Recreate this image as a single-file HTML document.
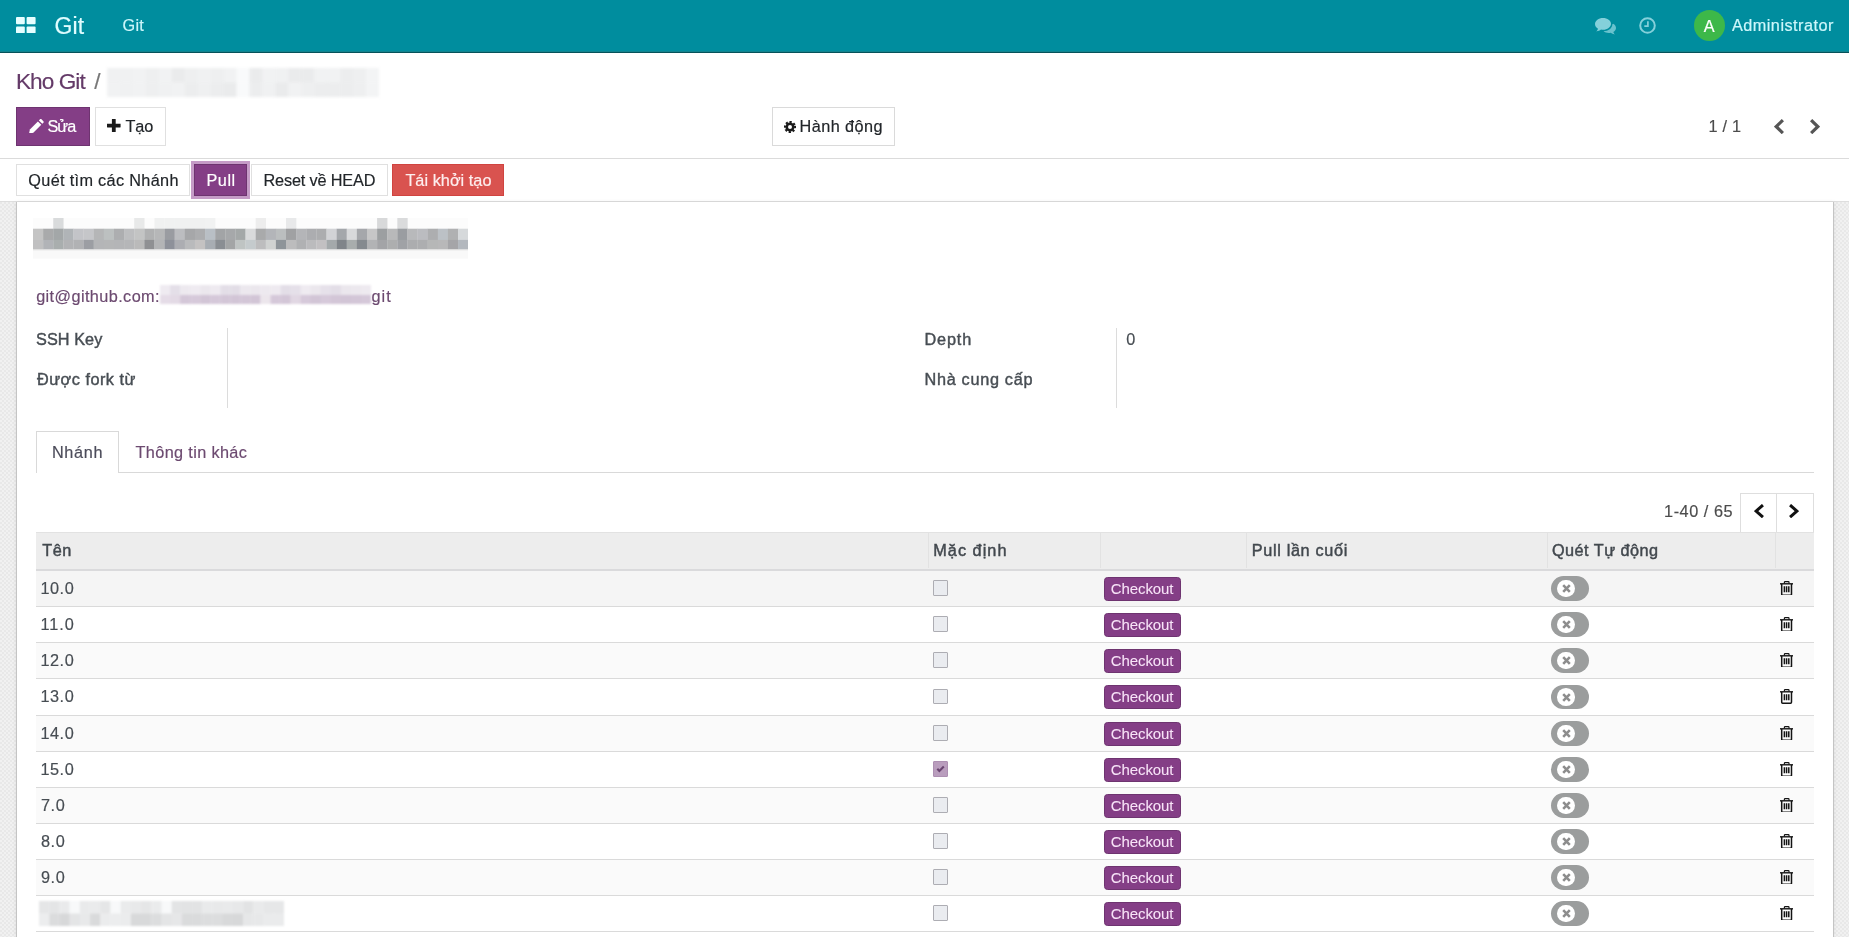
<!DOCTYPE html>
<html><head><meta charset="utf-8"><title>Git</title>
<style>
html,body{margin:0;padding:0;}
body{width:1849px;height:937px;overflow:hidden;background:#fff;position:relative;font-family:'Liberation Sans', sans-serif;}
.b{position:absolute;display:block;}
.t{position:absolute;white-space:pre;line-height:1;display:block;}
</style></head><body>
<div class="b" style="left:0px;top:0px;width:1849px;height:51px;background:#008d9e;"></div>
<div class="b" style="left:0px;top:51px;width:1849px;height:1px;background:#13838e;"></div>
<div class="b" style="left:0px;top:52px;width:1849px;height:1px;background:#06525a;"></div>
<div class="b" style="left:0px;top:158px;width:1849px;height:1px;background:#dbdbdb;"></div>
<div class="b" style="left:0px;top:201px;width:1849px;height:1px;background:#dedede;"></div>
<div class="b" style="left:0px;top:202px;width:1849px;height:735px;background-color:#ececec;background-image:conic-gradient(#f1f1f1 25%,#e8e8e8 0 50%,#f1f1f1 0 75%,#e8e8e8 0);background-size:4px 4px;"></div>
<div class="b" style="left:16px;top:202px;width:1818px;height:735px;background:#fff;border-left:1px solid #c4c4c4;border-right:1px solid #c4c4c4;box-sizing:border-box;box-shadow:0 0 4px rgba(0,0,0,.08);"></div>
<svg class="b" style="left:16px;top:16.7px" width="19.6" height="16.3" viewBox="0 0 19.6 16.3"><g fill="#e6feff"><rect x="0" y="0" width="8.800" height="7.200" rx="1"/><rect x="10.600" y="0" width="9" height="7.200" rx="1"/><rect x="0" y="9.500" width="8.800" height="6.800" rx="1"/><rect x="10.600" y="9.500" width="9" height="6.800" rx="1"/></g></svg>
<svg class="b" style="left:1595px;top:18px" width="21" height="17" viewBox="0 0 21 17"><g fill="#84d0da"><path d="M8 0C3.6 0 0 2.7 0 6c0 1.9 1.2 3.6 3 4.7c-.3 1-.9 1.9-1.7 2.7c1.900-.2 3.500-.9 4.700-1.800c.6.100 1.300.200 2 .2c4.400 0 8-2.700 8-6S12.400 0 8 0z"/><path d="M17.300 6.500c0 3.700-3.900 6.600-8.800 6.800c1.300 1.100 3.200 1.700 5.300 1.700c.6 0 1.200-.1 1.800-.2c1.100.9 2.500 1.500 4.200 1.700c-.7-.7-1.200-1.500-1.500-2.400c1.600-1 2.700-2.500 2.700-4.200c0-1.700-1.100-3.200-2.800-4.200c0 .3 -.9.500-.9.800z" opacity=".8"/></g></svg>
<svg class="b" style="left:1639px;top:17px" width="17" height="17" viewBox="0 0 17 17"><circle cx="8.5" cy="8.5" r="7.3" fill="none" stroke="#84d0da" stroke-width="2"/><path d="M8.9 4.300v4.900H5.300" fill="none" stroke="#84d0da" stroke-width="1.700"/></svg>
<div class="b" style="left:1694px;top:9.7px;width:31px;height:31.000000000000004px;background:#3db849;border-radius:50%;"></div>
<div class="b" style="left:16px;top:107px;width:74px;height:39px;background:#843e86;border:1px solid #6e3470;box-sizing:border-box;"></div>
<div class="b" style="left:95px;top:107px;width:71px;height:39px;background:#fff;border:1px solid #e0e0e0;box-sizing:border-box;"></div>
<div class="b" style="left:772px;top:107px;width:123px;height:39px;background:#fff;border:1px solid #dadada;box-sizing:border-box;"></div>
<svg class="b" style="left:28.9px;top:118.8px" width="14.7" height="14.7" viewBox="0 0 14.7 14.7"><g fill="#fff"><path d="M0 14.700l.9-4.300L8.900 2.400l3.400 3.400L4.300 13.800z"/><path d="M9.900 1.400l1.100-1.100c.4-.4 1.100-.4 1.500 0l1.900 1.900c.4.400.4 1.100 0 1.500l-1.100 1.100z"/></g></svg>
<svg class="b" style="left:107.2px;top:118.9px" width="13.6" height="13.2" viewBox="0 0 13.6 13.2"><path d="M4.900 .4c0-.3.200-.4.400-.4h3c.2 0 .4.100.4.400v4.300h4.500c.3 0 .4.200.4.400v3c0 .2-.1.400-.4.400H8.700v4.300c0 .3-.2.400-.4.400h-3c-.2 0-.4-.1-.4-.4V8.500H.4c-.3 0-.4-.2-.4-.4v-3c0-.2.100-.4.400-.4h4.500z" fill="#1b1b1b"/></svg>
<svg class="b" style="left:784px;top:121px" width="12" height="12" viewBox="-6 -6 12 12"><circle r="3.300" fill="none" stroke="#1b1b1b" stroke-width="2.600"/><circle r="5" fill="none" stroke="#1b1b1b" stroke-width="2.200" stroke-dasharray="2.100 1.827"  transform="rotate(-12)"/></svg>
<svg class="b" style="left:1774.3px;top:118.9px" width="10" height="15.2" viewBox="0 0 10 15.2"><polyline points="8.88,1.12 2.24,7.60 8.88,14.08" fill="none" stroke="#555" stroke-width="3.2" stroke-linejoin="miter"/></svg>
<svg class="b" style="left:1809.5px;top:118.9px" width="10" height="15.2" viewBox="0 0 10 15.2"><polyline points="1.12,1.12 7.76,7.60 1.12,14.08" fill="none" stroke="#555" stroke-width="3.2" stroke-linejoin="miter"/></svg>
<div class="b" style="left:16px;top:164px;width:174px;height:32px;background:#fff;border:1px solid #e0e0e0;box-sizing:border-box;"></div>
<div class="b" style="left:191.4px;top:161.4px;width:58.19999999999999px;height:37.19999999999999px;background:#c59bc7;"></div>
<div class="b" style="left:194.2px;top:164.2px;width:53.0px;height:31.400000000000006px;background:#843e86;border:1px solid #6e3470;box-sizing:border-box;"></div>
<div class="b" style="left:251.4px;top:164px;width:136.20000000000002px;height:32px;background:#fff;border:1px solid #e0e0e0;box-sizing:border-box;"></div>
<div class="b" style="left:392px;top:164.2px;width:112px;height:31.400000000000006px;background:#d9534f;border:1px solid #d04440;box-sizing:border-box;"></div>
<svg class="b" style="left:107px;top:68px;filter:blur(1.400px)" width="272" height="29"><rect x="0.00" y="0.0" width="13.35" height="14.800" fill="rgb(240,241,242)"/><rect x="0.00" y="14.5" width="13.35" height="14.800" fill="rgb(241,242,243)"/><rect x="12.95" y="0.0" width="13.35" height="14.800" fill="rgb(240,241,242)"/><rect x="12.95" y="14.5" width="13.35" height="14.800" fill="rgb(240,241,242)"/><rect x="25.90" y="0.0" width="13.35" height="14.800" fill="rgb(241,242,243)"/><rect x="25.90" y="14.5" width="13.35" height="14.800" fill="rgb(241,242,243)"/><rect x="38.86" y="0.0" width="13.35" height="14.800" fill="rgb(238,239,240)"/><rect x="38.86" y="14.5" width="13.35" height="14.800" fill="rgb(238,239,240)"/><rect x="51.81" y="0.0" width="13.35" height="14.800" fill="rgb(241,242,243)"/><rect x="51.81" y="14.5" width="13.35" height="14.800" fill="rgb(240,241,242)"/><rect x="64.76" y="0.0" width="13.35" height="14.800" fill="rgb(234,235,236)"/><rect x="64.76" y="14.5" width="13.35" height="14.800" fill="rgb(241,242,243)"/><rect x="77.71" y="0.0" width="13.35" height="14.800" fill="rgb(238,239,240)"/><rect x="77.71" y="14.5" width="13.35" height="14.800" fill="rgb(236,237,238)"/><rect x="90.67" y="0.0" width="13.35" height="14.800" fill="rgb(240,241,242)"/><rect x="90.67" y="14.5" width="13.35" height="14.800" fill="rgb(239,240,241)"/><rect x="103.62" y="0.0" width="13.35" height="14.800" fill="rgb(238,239,240)"/><rect x="103.62" y="14.5" width="13.35" height="14.800" fill="rgb(236,237,238)"/><rect x="116.57" y="0.0" width="13.35" height="14.800" fill="rgb(241,242,243)"/><rect x="116.57" y="14.5" width="13.35" height="14.800" fill="rgb(234,235,236)"/><rect x="129.52" y="0.0" width="13.35" height="14.800" fill="rgb(249,250,251)"/><rect x="129.52" y="14.5" width="13.35" height="14.800" fill="rgb(249,250,251)"/><rect x="142.48" y="0.0" width="13.35" height="14.800" fill="rgb(234,235,236)"/><rect x="142.48" y="14.5" width="13.35" height="14.800" fill="rgb(236,237,238)"/><rect x="155.43" y="0.0" width="13.35" height="14.800" fill="rgb(241,242,243)"/><rect x="155.43" y="14.5" width="13.35" height="14.800" fill="rgb(240,241,242)"/><rect x="168.38" y="0.0" width="13.35" height="14.800" fill="rgb(240,241,242)"/><rect x="168.38" y="14.5" width="13.35" height="14.800" fill="rgb(234,235,236)"/><rect x="181.33" y="0.0" width="13.35" height="14.800" fill="rgb(234,235,236)"/><rect x="181.33" y="14.5" width="13.35" height="14.800" fill="rgb(241,242,243)"/><rect x="194.29" y="0.0" width="13.35" height="14.800" fill="rgb(234,235,236)"/><rect x="194.29" y="14.5" width="13.35" height="14.800" fill="rgb(238,239,240)"/><rect x="207.24" y="0.0" width="13.35" height="14.800" fill="rgb(241,242,243)"/><rect x="207.24" y="14.5" width="13.35" height="14.800" fill="rgb(236,237,238)"/><rect x="220.19" y="0.0" width="13.35" height="14.800" fill="rgb(241,242,243)"/><rect x="220.19" y="14.5" width="13.35" height="14.800" fill="rgb(236,237,238)"/><rect x="233.14" y="0.0" width="13.35" height="14.800" fill="rgb(236,237,238)"/><rect x="233.14" y="14.5" width="13.35" height="14.800" fill="rgb(236,237,238)"/><rect x="246.10" y="0.0" width="13.35" height="14.800" fill="rgb(238,239,240)"/><rect x="246.10" y="14.5" width="13.35" height="14.800" fill="rgb(238,239,240)"/><rect x="259.05" y="0.0" width="13.35" height="14.800" fill="rgb(243,244,245)"/><rect x="259.05" y="14.5" width="13.35" height="14.800" fill="rgb(243,244,245)"/></svg>
<svg class="b" style="left:33px;top:218px;filter:blur(.7px)" width="435.2" height="46" viewBox="0 0 435.2 46"><rect x="0" y="0" width="435.2" height="11" fill="#fcfcfc"/><rect x="0.00" y="10.700" width="10.32" height="11.500" fill="#c4c4c4"/><rect x="0.00" y="21.900" width="10.32" height="9.500" fill="#c0c0c1"/><rect x="10.12" y="10.700" width="10.32" height="11.500" fill="#a9aaab"/><rect x="10.12" y="21.900" width="10.32" height="9.500" fill="#b1b3b7"/><rect x="20.24" y="0" width="10.32" height="11" fill="#d9dbdc"/><rect x="20.24" y="10.700" width="10.32" height="11.500" fill="#a3a7a8"/><rect x="20.24" y="21.900" width="10.32" height="9.500" fill="#a9aeae"/><rect x="30.36" y="10.700" width="10.32" height="11.500" fill="#b0b4b7"/><rect x="30.36" y="21.900" width="10.32" height="9.500" fill="#b2b3b5"/><rect x="40.48" y="10.700" width="10.32" height="11.500" fill="#c3c4c8"/><rect x="40.48" y="21.900" width="10.32" height="9.500" fill="#b1b2b4"/><rect x="50.60" y="10.700" width="10.32" height="11.500" fill="#c5c6c9"/><rect x="50.60" y="21.900" width="10.32" height="9.500" fill="#9c9ea3"/><rect x="60.73" y="10.700" width="10.32" height="11.500" fill="#b5b6b7"/><rect x="60.73" y="21.900" width="10.32" height="9.500" fill="#b4b5b7"/><rect x="70.85" y="10.700" width="10.32" height="11.500" fill="#bcc0c0"/><rect x="70.85" y="21.900" width="10.32" height="9.500" fill="#b5b6b7"/><rect x="80.97" y="10.700" width="10.32" height="11.500" fill="#adaeb0"/><rect x="80.97" y="21.900" width="10.32" height="9.500" fill="#b4b5b7"/><rect x="91.09" y="10.700" width="10.32" height="11.500" fill="#bdbec0"/><rect x="91.09" y="21.900" width="10.32" height="9.500" fill="#b5b6b8"/><rect x="101.21" y="0" width="10.32" height="11" fill="#e8e9e9"/><rect x="101.21" y="10.700" width="10.32" height="11.500" fill="#c3c4c4"/><rect x="101.21" y="21.900" width="10.32" height="9.500" fill="#bababa"/><rect x="111.33" y="10.700" width="10.32" height="11.500" fill="#b0b1b2"/><rect x="111.33" y="21.900" width="10.32" height="9.500" fill="#8f9093"/><rect x="121.45" y="0" width="10.32" height="11" fill="#f0f1f1"/><rect x="121.45" y="10.700" width="10.32" height="11.500" fill="#b6b7b8"/><rect x="121.45" y="21.900" width="10.32" height="9.500" fill="#b3b4b6"/><rect x="131.57" y="0" width="10.32" height="11" fill="#f0f1f1"/><rect x="131.57" y="10.700" width="10.32" height="11.500" fill="#9a9ca1"/><rect x="131.57" y="21.900" width="10.32" height="9.500" fill="#8e919a"/><rect x="141.69" y="0" width="10.32" height="11" fill="#f0f1f1"/><rect x="141.69" y="10.700" width="10.32" height="11.500" fill="#bcbdc0"/><rect x="141.69" y="21.900" width="10.32" height="9.500" fill="#acadb2"/><rect x="151.81" y="0" width="10.32" height="11" fill="#f0f1f1"/><rect x="151.81" y="10.700" width="10.32" height="11.500" fill="#a6a7a9"/><rect x="151.81" y="21.900" width="10.32" height="9.500" fill="#b9babc"/><rect x="161.93" y="0" width="10.32" height="11" fill="#f0f1f1"/><rect x="161.93" y="10.700" width="10.32" height="11.500" fill="#acadaf"/><rect x="161.93" y="21.900" width="10.32" height="9.500" fill="#c4c2c2"/><rect x="172.06" y="0" width="10.32" height="11" fill="#f1f2f2"/><rect x="172.06" y="10.700" width="10.32" height="11.500" fill="#b9bfc5"/><rect x="172.06" y="21.900" width="10.32" height="9.500" fill="#a8adb3"/><rect x="182.18" y="10.700" width="10.32" height="11.500" fill="#a2a4a6"/><rect x="182.18" y="21.900" width="10.32" height="9.500" fill="#8a8e93"/><rect x="192.30" y="10.700" width="10.32" height="11.500" fill="#a6a8aa"/><rect x="192.30" y="21.900" width="10.32" height="9.500" fill="#a3a5a6"/><rect x="202.42" y="10.700" width="10.32" height="11.500" fill="#a4a8a8"/><rect x="202.42" y="21.900" width="10.32" height="9.500" fill="#bfc4c3"/><rect x="212.54" y="10.700" width="10.32" height="11.500" fill="#d9dadb"/><rect x="212.54" y="21.900" width="10.32" height="9.500" fill="#c5cbcd"/><rect x="222.66" y="0" width="10.32" height="11" fill="#ededed"/><rect x="222.66" y="10.700" width="10.32" height="11.500" fill="#a9aaab"/><rect x="222.66" y="21.900" width="10.32" height="9.500" fill="#bdbdbe"/><rect x="232.78" y="10.700" width="10.32" height="11.500" fill="#b3b5b9"/><rect x="232.78" y="21.900" width="10.32" height="9.500" fill="#d0d2d1"/><rect x="242.90" y="10.700" width="10.32" height="11.500" fill="#bbbebf"/><rect x="242.90" y="21.900" width="10.32" height="9.500" fill="#8e9499"/><rect x="253.02" y="0" width="10.32" height="11" fill="#e8e9ea"/><rect x="253.02" y="10.700" width="10.32" height="11.500" fill="#a0a1a3"/><rect x="253.02" y="21.900" width="10.32" height="9.500" fill="#bcbcbd"/><rect x="263.14" y="10.700" width="10.32" height="11.500" fill="#b4b5b8"/><rect x="263.14" y="21.900" width="10.32" height="9.500" fill="#b0b1b3"/><rect x="273.27" y="10.700" width="10.32" height="11.500" fill="#acadb0"/><rect x="273.27" y="21.900" width="10.32" height="9.500" fill="#bbbbbd"/><rect x="283.39" y="10.700" width="10.32" height="11.500" fill="#acadaf"/><rect x="283.39" y="21.900" width="10.32" height="9.500" fill="#c2c0c2"/><rect x="293.51" y="10.700" width="10.32" height="11.500" fill="#d2d3d6"/><rect x="293.51" y="21.900" width="10.32" height="9.500" fill="#a4a9ab"/><rect x="303.63" y="10.700" width="10.32" height="11.500" fill="#a4a7ab"/><rect x="303.63" y="21.900" width="10.32" height="9.500" fill="#80858a"/><rect x="313.75" y="10.700" width="10.32" height="11.500" fill="#d8d9db"/><rect x="313.75" y="21.900" width="10.32" height="9.500" fill="#a8adad"/><rect x="323.87" y="10.700" width="10.32" height="11.500" fill="#a5a7ab"/><rect x="323.87" y="21.900" width="10.32" height="9.500" fill="#858a8f"/><rect x="333.99" y="10.700" width="10.32" height="11.500" fill="#c6c6c7"/><rect x="333.99" y="21.900" width="10.32" height="9.500" fill="#b2b3b5"/><rect x="344.11" y="0" width="10.32" height="11" fill="#d8d9da"/><rect x="344.11" y="10.700" width="10.32" height="11.500" fill="#9c9fa1"/><rect x="344.11" y="21.900" width="10.32" height="9.500" fill="#a3a4a7"/><rect x="354.23" y="10.700" width="10.32" height="11.500" fill="#b8b9ba"/><rect x="354.23" y="21.900" width="10.32" height="9.500" fill="#adaeaf"/><rect x="364.35" y="0" width="10.32" height="11" fill="#dadbdc"/><rect x="364.35" y="10.700" width="10.32" height="11.500" fill="#9a9da1"/><rect x="364.35" y="21.900" width="10.32" height="9.500" fill="#a0a2a6"/><rect x="374.47" y="10.700" width="10.32" height="11.500" fill="#b8b9bb"/><rect x="374.47" y="21.900" width="10.32" height="9.500" fill="#acadaf"/><rect x="384.60" y="10.700" width="10.32" height="11.500" fill="#bbbcc0"/><rect x="384.60" y="21.900" width="10.32" height="9.500" fill="#adaeb0"/><rect x="394.72" y="10.700" width="10.32" height="11.500" fill="#adaeb0"/><rect x="394.72" y="21.900" width="10.32" height="9.500" fill="#b6b7b7"/><rect x="404.84" y="10.700" width="10.32" height="11.500" fill="#bcc1c6"/><rect x="404.84" y="21.900" width="10.32" height="9.500" fill="#b8b8b9"/><rect x="414.96" y="10.700" width="10.32" height="11.500" fill="#b0b1b2"/><rect x="414.96" y="21.900" width="10.32" height="9.500" fill="#a5a5a8"/><rect x="425.08" y="10.700" width="10.32" height="11.500" fill="#d6d9db"/><rect x="425.08" y="21.900" width="10.32" height="9.500" fill="#b3b8be"/><rect x="0" y="31.400" width="435.2" height="1.200" fill="#dcdcdd"/><rect x="0" y="32.600" width="435.2" height="8" fill="#f9f9f9"/></svg>
<svg class="b" style="left:160px;top:285.4px;filter:blur(.8px)" width="211" height="19"><rect x="0.00" y="0" width="10.35" height="10.300" fill="rgb(239,235,241)"/><rect x="0.00" y="10" width="10.35" height="9" fill="rgb(229,220,231)"/><rect x="10.05" y="0" width="10.35" height="10.300" fill="rgb(228,223,232)"/><rect x="10.05" y="10" width="10.35" height="9" fill="rgb(227,218,229)"/><rect x="20.10" y="0" width="10.35" height="10.300" fill="rgb(237,233,239)"/><rect x="20.10" y="10" width="10.35" height="9" fill="rgb(212,199,216)"/><rect x="30.14" y="0" width="10.35" height="10.300" fill="rgb(239,235,241)"/><rect x="30.14" y="10" width="10.35" height="9" fill="rgb(214,201,218)"/><rect x="40.19" y="0" width="10.35" height="10.300" fill="rgb(235,231,237)"/><rect x="40.19" y="10" width="10.35" height="9" fill="rgb(210,197,214)"/><rect x="50.24" y="0" width="10.35" height="10.300" fill="rgb(238,234,240)"/><rect x="50.24" y="10" width="10.35" height="9" fill="rgb(213,200,217)"/><rect x="60.29" y="0" width="10.35" height="10.300" fill="rgb(227,222,231)"/><rect x="60.29" y="10" width="10.35" height="9" fill="rgb(211,198,215)"/><rect x="70.33" y="0" width="10.35" height="10.300" fill="rgb(226,221,230)"/><rect x="70.33" y="10" width="10.35" height="9" fill="rgb(210,197,214)"/><rect x="80.38" y="0" width="10.35" height="10.300" fill="rgb(236,232,238)"/><rect x="80.38" y="10" width="10.35" height="9" fill="rgb(211,198,215)"/><rect x="90.43" y="0" width="10.35" height="10.300" fill="rgb(235,231,237)"/><rect x="90.43" y="10" width="10.35" height="9" fill="rgb(210,197,214)"/><rect x="100.48" y="0" width="10.35" height="10.300" fill="rgb(237,233,239)"/><rect x="100.48" y="10" width="10.35" height="9" fill="rgb(236,230,236)"/><rect x="110.52" y="0" width="10.35" height="10.300" fill="rgb(238,234,240)"/><rect x="110.52" y="10" width="10.35" height="9" fill="rgb(213,200,217)"/><rect x="120.57" y="0" width="10.35" height="10.300" fill="rgb(227,222,231)"/><rect x="120.57" y="10" width="10.35" height="9" fill="rgb(211,198,215)"/><rect x="130.62" y="0" width="10.35" height="10.300" fill="rgb(229,224,233)"/><rect x="130.62" y="10" width="10.35" height="9" fill="rgb(225,215,227)"/><rect x="140.67" y="0" width="10.35" height="10.300" fill="rgb(239,235,241)"/><rect x="140.67" y="10" width="10.35" height="9" fill="rgb(214,201,218)"/><rect x="150.71" y="0" width="10.35" height="10.300" fill="rgb(235,231,237)"/><rect x="150.71" y="10" width="10.35" height="9" fill="rgb(210,197,214)"/><rect x="160.76" y="0" width="10.35" height="10.300" fill="rgb(230,225,234)"/><rect x="160.76" y="10" width="10.35" height="9" fill="rgb(214,201,218)"/><rect x="170.81" y="0" width="10.35" height="10.300" fill="rgb(227,222,231)"/><rect x="170.81" y="10" width="10.35" height="9" fill="rgb(211,198,215)"/><rect x="180.86" y="0" width="10.35" height="10.300" fill="rgb(235,231,237)"/><rect x="180.86" y="10" width="10.35" height="9" fill="rgb(210,197,214)"/><rect x="190.90" y="0" width="10.35" height="10.300" fill="rgb(236,232,238)"/><rect x="190.90" y="10" width="10.35" height="9" fill="rgb(211,198,215)"/><rect x="200.95" y="0" width="10.35" height="10.300" fill="rgb(238,234,240)"/><rect x="200.95" y="10" width="10.35" height="9" fill="rgb(213,200,217)"/></svg>
<div class="b" style="left:227.3px;top:327.5px;width:1.0px;height:80.0px;background:#dcdcdc;"></div>
<div class="b" style="left:1116px;top:327.5px;width:1px;height:80.0px;background:#dcdcdc;"></div>
<div class="b" style="left:36px;top:431px;width:83px;height:42px;background:#fff;border:1px solid #d9d9d9;border-bottom:none;box-sizing:border-box;"></div>
<div class="b" style="left:119px;top:472px;width:1694.5px;height:1px;background:#d9d9d9;"></div>
<div class="b" style="left:1740px;top:493px;width:74px;height:40px;border:1px solid #dedede;box-sizing:border-box;background:#fff;"></div>
<div class="b" style="left:1776px;top:493px;width:1px;height:40px;background:#dedede;"></div>
<svg class="b" style="left:1754px;top:504.2px" width="10" height="14.2" viewBox="0 0 10 14.2"><polyline points="8.95,1.05 2.10,7.10 8.95,13.15" fill="none" stroke="#111" stroke-width="3.0" stroke-linejoin="miter"/></svg>
<svg class="b" style="left:1789.3px;top:504.2px" width="10" height="14.2" viewBox="0 0 10 14.2"><polyline points="1.05,1.05 7.90,7.10 1.05,13.15" fill="none" stroke="#111" stroke-width="3.0" stroke-linejoin="miter"/></svg>
<div class="b" style="left:36px;top:532px;width:1777.5px;height:36.5px;background:#ededed;border-top:1px solid #e2e2e2;box-sizing:border-box;"></div>
<div class="b" style="left:36px;top:568.5px;width:1777.5px;height:2.5px;background:#dadadc;"></div>
<div class="b" style="left:928px;top:533px;width:1px;height:35px;background:#e2e2e2;"></div>
<div class="b" style="left:1100px;top:533px;width:1px;height:35px;background:#e2e2e2;"></div>
<div class="b" style="left:1246px;top:533px;width:1px;height:35px;background:#e2e2e2;"></div>
<div class="b" style="left:1546.5px;top:533px;width:1.0px;height:35px;background:#e2e2e2;"></div>
<div class="b" style="left:1775px;top:533px;width:1px;height:35px;background:#e2e2e2;"></div>
<div class="b" style="left:36px;top:571px;width:1777.5px;height:35px;background:#f5f5f5;"></div>
<div class="b" style="left:36px;top:643px;width:1777.5px;height:35px;background:#fafafa;"></div>
<div class="b" style="left:36px;top:716px;width:1777.5px;height:35px;background:#fafafa;"></div>
<div class="b" style="left:36px;top:788px;width:1777.5px;height:35px;background:#fafafa;"></div>
<div class="b" style="left:36px;top:860px;width:1777.5px;height:35px;background:#fafafa;"></div>
<div class="b" style="left:36px;top:606px;width:1777.5px;height:1px;background:#dadada;"></div>
<div class="b" style="left:36px;top:642px;width:1777.5px;height:1px;background:#dadada;"></div>
<div class="b" style="left:36px;top:678px;width:1777.5px;height:1px;background:#dadada;"></div>
<div class="b" style="left:36px;top:715px;width:1777.5px;height:1px;background:#dadada;"></div>
<div class="b" style="left:36px;top:751px;width:1777.5px;height:1px;background:#dadada;"></div>
<div class="b" style="left:36px;top:787px;width:1777.5px;height:1px;background:#dadada;"></div>
<div class="b" style="left:36px;top:823px;width:1777.5px;height:1px;background:#dadada;"></div>
<div class="b" style="left:36px;top:859px;width:1777.5px;height:1px;background:#dadada;"></div>
<div class="b" style="left:36px;top:895px;width:1777.5px;height:1px;background:#dadada;"></div>
<div class="b" style="left:36px;top:931px;width:1777.5px;height:1px;background:#dadada;"></div>
<div class="b" style="left:933px;top:580.2px;width:15px;height:15.600000000000023px;background:#eaecf0;border:1px solid #adadb3;box-sizing:border-box;border-radius:1px;"></div>
<div class="b" style="left:1104px;top:576.7px;width:77px;height:23.899999999999977px;background:#843e86;border:1px solid #6e3470;box-sizing:border-box;border-radius:3.5px;"></div>
<div class="b" style="left:1551.2px;top:576.0px;width:37.799999999999955px;height:24.799999999999955px;background:#9b9d9d;border-radius:13px;"></div>
<div class="b" style="left:1557.2px;top:579.9px;width:17.59999999999991px;height:17.600000000000023px;background:#fff;border-radius:50%;"></div>
<svg class="b" style="left:1561.5px;top:584.2px" width="9" height="9" viewBox="0 0 9 9"><path d="M1.200 1.200l6.600 6.600M7.800 1.200l-6.600 6.600" stroke="#8d8d8d" stroke-width="2.600"/></svg>
<svg class="b" style="left:1780px;top:580.6px" width="13.2" height="14.8" viewBox="0 0 13.2 14.8"><g fill="none" stroke="#141414"><path d="M0 2.800h13.600" stroke-width="1.400"/><path d="M4.400 2.400V1.300c0-.5.300-.7.700-.7h3.200c.4 0 .7.200.7.700v1.100" stroke-width="1.200"/><path d="M1.700 3v10.300c0 .5.400.9.900.9h8c.5 0 .9-.4.900-.9V3" stroke-width="1.500"/><path d="M4.400 5.300v6M6.600 5.300v6M8.800 5.300v6" stroke-width="1.500"/></g></svg>
<div class="b" style="left:933px;top:616.2px;width:15px;height:15.600000000000023px;background:#eaecf0;border:1px solid #adadb3;box-sizing:border-box;border-radius:1px;"></div>
<div class="b" style="left:1104px;top:612.7px;width:77px;height:23.899999999999977px;background:#843e86;border:1px solid #6e3470;box-sizing:border-box;border-radius:3.5px;"></div>
<div class="b" style="left:1551.2px;top:612.0px;width:37.799999999999955px;height:24.799999999999955px;background:#9b9d9d;border-radius:13px;"></div>
<div class="b" style="left:1557.2px;top:615.9px;width:17.59999999999991px;height:17.600000000000023px;background:#fff;border-radius:50%;"></div>
<svg class="b" style="left:1561.5px;top:620.2px" width="9" height="9" viewBox="0 0 9 9"><path d="M1.200 1.200l6.600 6.600M7.800 1.200l-6.600 6.600" stroke="#8d8d8d" stroke-width="2.600"/></svg>
<svg class="b" style="left:1780px;top:616.6px" width="13.2" height="14.8" viewBox="0 0 13.2 14.8"><g fill="none" stroke="#141414"><path d="M0 2.800h13.600" stroke-width="1.400"/><path d="M4.400 2.400V1.300c0-.5.300-.7.700-.7h3.200c.4 0 .7.200.7.700v1.100" stroke-width="1.200"/><path d="M1.700 3v10.300c0 .5.400.9.900.9h8c.5 0 .9-.4.900-.9V3" stroke-width="1.500"/><path d="M4.400 5.300v6M6.600 5.300v6M8.800 5.300v6" stroke-width="1.500"/></g></svg>
<div class="b" style="left:933px;top:652.2px;width:15px;height:15.600000000000023px;background:#eaecf0;border:1px solid #adadb3;box-sizing:border-box;border-radius:1px;"></div>
<div class="b" style="left:1104px;top:648.7px;width:77px;height:23.899999999999977px;background:#843e86;border:1px solid #6e3470;box-sizing:border-box;border-radius:3.5px;"></div>
<div class="b" style="left:1551.2px;top:648.0px;width:37.799999999999955px;height:24.799999999999955px;background:#9b9d9d;border-radius:13px;"></div>
<div class="b" style="left:1557.2px;top:651.9px;width:17.59999999999991px;height:17.600000000000023px;background:#fff;border-radius:50%;"></div>
<svg class="b" style="left:1561.5px;top:656.2px" width="9" height="9" viewBox="0 0 9 9"><path d="M1.200 1.200l6.600 6.600M7.800 1.200l-6.600 6.600" stroke="#8d8d8d" stroke-width="2.600"/></svg>
<svg class="b" style="left:1780px;top:652.6px" width="13.2" height="14.8" viewBox="0 0 13.2 14.8"><g fill="none" stroke="#141414"><path d="M0 2.800h13.600" stroke-width="1.400"/><path d="M4.400 2.400V1.300c0-.5.300-.7.700-.7h3.200c.4 0 .7.200.7.700v1.100" stroke-width="1.200"/><path d="M1.700 3v10.300c0 .5.400.9.900.9h8c.5 0 .9-.4.900-.9V3" stroke-width="1.500"/><path d="M4.400 5.300v6M6.600 5.300v6M8.800 5.300v6" stroke-width="1.500"/></g></svg>
<div class="b" style="left:933px;top:688.7px;width:15px;height:15.600000000000023px;background:#eaecf0;border:1px solid #adadb3;box-sizing:border-box;border-radius:1px;"></div>
<div class="b" style="left:1104px;top:685.2px;width:77px;height:23.899999999999977px;background:#843e86;border:1px solid #6e3470;box-sizing:border-box;border-radius:3.5px;"></div>
<div class="b" style="left:1551.2px;top:684.5px;width:37.799999999999955px;height:24.799999999999955px;background:#9b9d9d;border-radius:13px;"></div>
<div class="b" style="left:1557.2px;top:688.4px;width:17.59999999999991px;height:17.600000000000023px;background:#fff;border-radius:50%;"></div>
<svg class="b" style="left:1561.5px;top:692.7px" width="9" height="9" viewBox="0 0 9 9"><path d="M1.200 1.200l6.600 6.600M7.800 1.200l-6.600 6.600" stroke="#8d8d8d" stroke-width="2.600"/></svg>
<svg class="b" style="left:1780px;top:689.1px" width="13.2" height="14.8" viewBox="0 0 13.2 14.8"><g fill="none" stroke="#141414"><path d="M0 2.800h13.600" stroke-width="1.400"/><path d="M4.400 2.400V1.300c0-.5.300-.7.700-.7h3.200c.4 0 .7.200.7.700v1.100" stroke-width="1.200"/><path d="M1.700 3v10.300c0 .5.400.9.900.9h8c.5 0 .9-.4.900-.9V3" stroke-width="1.500"/><path d="M4.400 5.300v6M6.600 5.300v6M8.800 5.300v6" stroke-width="1.500"/></g></svg>
<div class="b" style="left:933px;top:725.2px;width:15px;height:15.600000000000023px;background:#eaecf0;border:1px solid #adadb3;box-sizing:border-box;border-radius:1px;"></div>
<div class="b" style="left:1104px;top:721.7px;width:77px;height:23.899999999999977px;background:#843e86;border:1px solid #6e3470;box-sizing:border-box;border-radius:3.5px;"></div>
<div class="b" style="left:1551.2px;top:721.0px;width:37.799999999999955px;height:24.799999999999955px;background:#9b9d9d;border-radius:13px;"></div>
<div class="b" style="left:1557.2px;top:724.9px;width:17.59999999999991px;height:17.600000000000023px;background:#fff;border-radius:50%;"></div>
<svg class="b" style="left:1561.5px;top:729.2px" width="9" height="9" viewBox="0 0 9 9"><path d="M1.200 1.200l6.600 6.600M7.800 1.200l-6.600 6.600" stroke="#8d8d8d" stroke-width="2.600"/></svg>
<svg class="b" style="left:1780px;top:725.6px" width="13.2" height="14.8" viewBox="0 0 13.2 14.8"><g fill="none" stroke="#141414"><path d="M0 2.800h13.600" stroke-width="1.400"/><path d="M4.400 2.400V1.300c0-.5.300-.7.700-.7h3.200c.4 0 .7.200.7.700v1.100" stroke-width="1.200"/><path d="M1.700 3v10.300c0 .5.400.9.900.9h8c.5 0 .9-.4.900-.9V3" stroke-width="1.500"/><path d="M4.400 5.300v6M6.600 5.300v6M8.800 5.300v6" stroke-width="1.500"/></g></svg>
<div class="b" style="left:933px;top:761.2px;width:15px;height:15.600000000000023px;background:#b99dbd;border:1px solid #ad8fb2;box-sizing:border-box;border-radius:1px;"></div>
<svg class="b" style="left:933px;top:761.2px" width="15" height="15.6" viewBox="0 0 15 15.600"><path d="M4.300 7.800l2.100 2.300L10.800 5.600" fill="none" stroke="#6a4571" stroke-width="2.100"/></svg>
<div class="b" style="left:1104px;top:757.7px;width:77px;height:23.899999999999977px;background:#843e86;border:1px solid #6e3470;box-sizing:border-box;border-radius:3.5px;"></div>
<div class="b" style="left:1551.2px;top:757.0px;width:37.799999999999955px;height:24.799999999999955px;background:#9b9d9d;border-radius:13px;"></div>
<div class="b" style="left:1557.2px;top:760.9px;width:17.59999999999991px;height:17.600000000000023px;background:#fff;border-radius:50%;"></div>
<svg class="b" style="left:1561.5px;top:765.2px" width="9" height="9" viewBox="0 0 9 9"><path d="M1.200 1.200l6.600 6.600M7.800 1.200l-6.600 6.600" stroke="#8d8d8d" stroke-width="2.600"/></svg>
<svg class="b" style="left:1780px;top:761.6px" width="13.2" height="14.8" viewBox="0 0 13.2 14.8"><g fill="none" stroke="#141414"><path d="M0 2.800h13.600" stroke-width="1.400"/><path d="M4.400 2.400V1.300c0-.5.300-.7.700-.7h3.200c.4 0 .7.200.7.700v1.100" stroke-width="1.200"/><path d="M1.700 3v10.300c0 .5.400.9.900.9h8c.5 0 .9-.4.900-.9V3" stroke-width="1.500"/><path d="M4.400 5.300v6M6.600 5.300v6M8.800 5.300v6" stroke-width="1.500"/></g></svg>
<div class="b" style="left:933px;top:797.2px;width:15px;height:15.600000000000023px;background:#eaecf0;border:1px solid #adadb3;box-sizing:border-box;border-radius:1px;"></div>
<div class="b" style="left:1104px;top:793.7px;width:77px;height:23.899999999999977px;background:#843e86;border:1px solid #6e3470;box-sizing:border-box;border-radius:3.5px;"></div>
<div class="b" style="left:1551.2px;top:793.0px;width:37.799999999999955px;height:24.799999999999955px;background:#9b9d9d;border-radius:13px;"></div>
<div class="b" style="left:1557.2px;top:796.9px;width:17.59999999999991px;height:17.600000000000023px;background:#fff;border-radius:50%;"></div>
<svg class="b" style="left:1561.5px;top:801.2px" width="9" height="9" viewBox="0 0 9 9"><path d="M1.200 1.200l6.600 6.600M7.800 1.200l-6.600 6.600" stroke="#8d8d8d" stroke-width="2.600"/></svg>
<svg class="b" style="left:1780px;top:797.6px" width="13.2" height="14.8" viewBox="0 0 13.2 14.8"><g fill="none" stroke="#141414"><path d="M0 2.800h13.600" stroke-width="1.400"/><path d="M4.400 2.400V1.300c0-.5.300-.7.700-.7h3.200c.4 0 .7.200.7.700v1.100" stroke-width="1.200"/><path d="M1.700 3v10.300c0 .5.400.9.900.9h8c.5 0 .9-.4.900-.9V3" stroke-width="1.500"/><path d="M4.400 5.300v6M6.600 5.300v6M8.800 5.300v6" stroke-width="1.500"/></g></svg>
<div class="b" style="left:933px;top:833.2px;width:15px;height:15.600000000000023px;background:#eaecf0;border:1px solid #adadb3;box-sizing:border-box;border-radius:1px;"></div>
<div class="b" style="left:1104px;top:829.7px;width:77px;height:23.899999999999977px;background:#843e86;border:1px solid #6e3470;box-sizing:border-box;border-radius:3.5px;"></div>
<div class="b" style="left:1551.2px;top:829.0px;width:37.799999999999955px;height:24.799999999999955px;background:#9b9d9d;border-radius:13px;"></div>
<div class="b" style="left:1557.2px;top:832.9px;width:17.59999999999991px;height:17.600000000000023px;background:#fff;border-radius:50%;"></div>
<svg class="b" style="left:1561.5px;top:837.2px" width="9" height="9" viewBox="0 0 9 9"><path d="M1.200 1.200l6.600 6.600M7.800 1.200l-6.600 6.600" stroke="#8d8d8d" stroke-width="2.600"/></svg>
<svg class="b" style="left:1780px;top:833.6px" width="13.2" height="14.8" viewBox="0 0 13.2 14.8"><g fill="none" stroke="#141414"><path d="M0 2.800h13.600" stroke-width="1.400"/><path d="M4.400 2.400V1.300c0-.5.300-.7.700-.7h3.200c.4 0 .7.200.7.700v1.100" stroke-width="1.200"/><path d="M1.700 3v10.300c0 .5.400.9.900.9h8c.5 0 .9-.4.900-.9V3" stroke-width="1.500"/><path d="M4.400 5.300v6M6.600 5.300v6M8.800 5.300v6" stroke-width="1.500"/></g></svg>
<div class="b" style="left:933px;top:869.2px;width:15px;height:15.600000000000023px;background:#eaecf0;border:1px solid #adadb3;box-sizing:border-box;border-radius:1px;"></div>
<div class="b" style="left:1104px;top:865.7px;width:77px;height:23.899999999999977px;background:#843e86;border:1px solid #6e3470;box-sizing:border-box;border-radius:3.5px;"></div>
<div class="b" style="left:1551.2px;top:865.0px;width:37.799999999999955px;height:24.799999999999955px;background:#9b9d9d;border-radius:13px;"></div>
<div class="b" style="left:1557.2px;top:868.9px;width:17.59999999999991px;height:17.600000000000023px;background:#fff;border-radius:50%;"></div>
<svg class="b" style="left:1561.5px;top:873.2px" width="9" height="9" viewBox="0 0 9 9"><path d="M1.200 1.200l6.600 6.600M7.800 1.200l-6.600 6.600" stroke="#8d8d8d" stroke-width="2.600"/></svg>
<svg class="b" style="left:1780px;top:869.6px" width="13.2" height="14.8" viewBox="0 0 13.2 14.8"><g fill="none" stroke="#141414"><path d="M0 2.800h13.600" stroke-width="1.400"/><path d="M4.400 2.400V1.300c0-.5.300-.7.700-.7h3.200c.4 0 .7.200.7.700v1.100" stroke-width="1.200"/><path d="M1.700 3v10.300c0 .5.400.9.900.9h8c.5 0 .9-.4.900-.9V3" stroke-width="1.500"/><path d="M4.400 5.300v6M6.600 5.300v6M8.800 5.300v6" stroke-width="1.500"/></g></svg>
<div class="b" style="left:933px;top:905.2px;width:15px;height:15.600000000000023px;background:#eaecf0;border:1px solid #adadb3;box-sizing:border-box;border-radius:1px;"></div>
<div class="b" style="left:1104px;top:901.7px;width:77px;height:23.899999999999977px;background:#843e86;border:1px solid #6e3470;box-sizing:border-box;border-radius:3.5px;"></div>
<div class="b" style="left:1551.2px;top:901.0px;width:37.799999999999955px;height:24.799999999999955px;background:#9b9d9d;border-radius:13px;"></div>
<div class="b" style="left:1557.2px;top:904.9px;width:17.59999999999991px;height:17.600000000000023px;background:#fff;border-radius:50%;"></div>
<svg class="b" style="left:1561.5px;top:909.2px" width="9" height="9" viewBox="0 0 9 9"><path d="M1.200 1.200l6.600 6.600M7.800 1.200l-6.600 6.600" stroke="#8d8d8d" stroke-width="2.600"/></svg>
<svg class="b" style="left:1780px;top:905.6px" width="13.2" height="14.8" viewBox="0 0 13.2 14.8"><g fill="none" stroke="#141414"><path d="M0 2.800h13.600" stroke-width="1.400"/><path d="M4.400 2.400V1.300c0-.5.300-.7.700-.7h3.200c.4 0 .7.200.7.700v1.100" stroke-width="1.200"/><path d="M1.700 3v10.300c0 .5.400.9.900.9h8c.5 0 .9-.4.900-.9V3" stroke-width="1.500"/><path d="M4.400 5.300v6M6.600 5.300v6M8.800 5.300v6" stroke-width="1.500"/></g></svg>
<svg class="b" style="left:39px;top:901px;filter:blur(.8px)" width="245" height="25"><rect x="0.00" y="0" width="10.51" height="12.800" fill="rgb(229,230,231)"/><rect x="0.00" y="12.500" width="10.51" height="12.500" fill="rgb(236,237,238)"/><rect x="10.21" y="0" width="10.51" height="12.800" fill="rgb(228,229,230)"/><rect x="10.21" y="12.500" width="10.51" height="12.500" fill="rgb(219,220,221)"/><rect x="20.42" y="0" width="10.51" height="12.800" fill="rgb(233,234,235)"/><rect x="20.42" y="12.500" width="10.51" height="12.500" fill="rgb(215,216,217)"/><rect x="30.62" y="0" width="10.51" height="12.800" fill="rgb(248,249,250)"/><rect x="30.62" y="12.500" width="10.51" height="12.500" fill="rgb(228,229,230)"/><rect x="40.83" y="0" width="10.51" height="12.800" fill="rgb(233,234,235)"/><rect x="40.83" y="12.500" width="10.51" height="12.500" fill="rgb(232,233,234)"/><rect x="51.04" y="0" width="10.51" height="12.800" fill="rgb(234,235,236)"/><rect x="51.04" y="12.500" width="10.51" height="12.500" fill="rgb(217,218,219)"/><rect x="61.25" y="0" width="10.51" height="12.800" fill="rgb(229,230,231)"/><rect x="61.25" y="12.500" width="10.51" height="12.500" fill="rgb(235,236,237)"/><rect x="71.46" y="0" width="10.51" height="12.800" fill="rgb(248,249,250)"/><rect x="71.46" y="12.500" width="10.51" height="12.500" fill="rgb(236,237,238)"/><rect x="81.67" y="0" width="10.51" height="12.800" fill="rgb(234,235,236)"/><rect x="81.67" y="12.500" width="10.51" height="12.500" fill="rgb(235,236,237)"/><rect x="91.88" y="0" width="10.51" height="12.800" fill="rgb(232,233,234)"/><rect x="91.88" y="12.500" width="10.51" height="12.500" fill="rgb(216,217,218)"/><rect x="102.08" y="0" width="10.51" height="12.800" fill="rgb(229,230,231)"/><rect x="102.08" y="12.500" width="10.51" height="12.500" fill="rgb(216,217,218)"/><rect x="112.29" y="0" width="10.51" height="12.800" fill="rgb(234,235,236)"/><rect x="112.29" y="12.500" width="10.51" height="12.500" fill="rgb(220,221,222)"/><rect x="122.50" y="0" width="10.51" height="12.800" fill="rgb(248,249,250)"/><rect x="122.50" y="12.500" width="10.51" height="12.500" fill="rgb(228,229,230)"/><rect x="132.71" y="0" width="10.51" height="12.800" fill="rgb(227,228,229)"/><rect x="132.71" y="12.500" width="10.51" height="12.500" fill="rgb(230,231,232)"/><rect x="142.92" y="0" width="10.51" height="12.800" fill="rgb(226,227,228)"/><rect x="142.92" y="12.500" width="10.51" height="12.500" fill="rgb(218,219,220)"/><rect x="153.12" y="0" width="10.51" height="12.800" fill="rgb(226,227,228)"/><rect x="153.12" y="12.500" width="10.51" height="12.500" fill="rgb(218,219,220)"/><rect x="163.33" y="0" width="10.51" height="12.800" fill="rgb(233,234,235)"/><rect x="163.33" y="12.500" width="10.51" height="12.500" fill="rgb(220,221,222)"/><rect x="173.54" y="0" width="10.51" height="12.800" fill="rgb(232,233,234)"/><rect x="173.54" y="12.500" width="10.51" height="12.500" fill="rgb(220,221,222)"/><rect x="183.75" y="0" width="10.51" height="12.800" fill="rgb(233,234,235)"/><rect x="183.75" y="12.500" width="10.51" height="12.500" fill="rgb(216,217,218)"/><rect x="193.96" y="0" width="10.51" height="12.800" fill="rgb(231,232,233)"/><rect x="193.96" y="12.500" width="10.51" height="12.500" fill="rgb(215,216,217)"/><rect x="204.17" y="0" width="10.51" height="12.800" fill="rgb(226,227,228)"/><rect x="204.17" y="12.500" width="10.51" height="12.500" fill="rgb(230,231,232)"/><rect x="214.38" y="0" width="10.51" height="12.800" fill="rgb(233,234,235)"/><rect x="214.38" y="12.500" width="10.51" height="12.500" fill="rgb(231,232,233)"/><rect x="224.58" y="0" width="10.51" height="12.800" fill="rgb(230,231,232)"/><rect x="224.58" y="12.500" width="10.51" height="12.500" fill="rgb(234,235,236)"/><rect x="234.79" y="0" width="10.51" height="12.800" fill="rgb(230,231,232)"/><rect x="234.79" y="12.500" width="10.51" height="12.500" fill="rgb(234,235,236)"/></svg>
<div id="txt" style="position:absolute;left:0;top:0;width:1849px;height:937px;will-change:transform;">
<span class="t" style="left:54.61px;top:15px;font-size:23.0px;color:#e0fdff;letter-spacing:0.014px;-webkit-text-stroke:0.18px #e0fdff;">Git</span>
<span class="t" style="left:122.48px;top:17px;font-size:16.25px;color:#cdf7fb;letter-spacing:0.292px;-webkit-text-stroke:0.18px #cdf7fb;">Git</span>
<span class="t" style="left:1731.92px;top:17px;font-size:16.25px;color:#cdf7fb;letter-spacing:0.485px;-webkit-text-stroke:0.18px #cdf7fb;">Administrator</span>
<span class="t" style="left:1703.77px;top:18px;font-size:16.25px;color:#ffffff;-webkit-text-stroke:0.18px #ffffff;">A</span>
<span class="t" style="left:15.89px;top:71px;font-size:22.6px;color:#643a68;letter-spacing:-0.927px;-webkit-text-stroke:0.18px #643a68;">Kho Git</span>
<span class="t" style="left:94.13px;top:71px;font-size:22.6px;color:#777;-webkit-text-stroke:0.18px #777;">/</span>
<span class="t" style="left:47.39px;top:118px;font-size:16.25px;color:#fff;letter-spacing:-0.949px;-webkit-text-stroke:0.18px #fff;">Sửa</span>
<span class="t" style="left:125.58px;top:118px;font-size:16.25px;color:#212529;letter-spacing:-0.180px;-webkit-text-stroke:0.18px #212529;">Tạo</span>
<span class="t" style="left:799.49px;top:118px;font-size:16.25px;color:#212529;letter-spacing:0.446px;-webkit-text-stroke:0.18px #212529;">Hành động</span>
<span class="t" style="left:1708.39px;top:118px;font-size:16.25px;color:#4c4c4c;letter-spacing:0.264px;-webkit-text-stroke:0.18px #4c4c4c;">1 / 1</span>
<span class="t" style="left:28.33px;top:172px;font-size:16.25px;color:#212529;letter-spacing:0.329px;-webkit-text-stroke:0.18px #212529;">Quét tìm các Nhánh</span>
<span class="t" style="left:206.49px;top:172px;font-size:16.25px;color:#fff;letter-spacing:0.514px;-webkit-text-stroke:0.18px #fff;">Pull</span>
<span class="t" style="left:263.49px;top:172px;font-size:16.25px;color:#212529;letter-spacing:-0.159px;-webkit-text-stroke:0.18px #212529;">Reset về HEAD</span>
<span class="t" style="left:405.38px;top:172px;font-size:16.25px;color:#fdeeee;letter-spacing:0.042px;-webkit-text-stroke:0.18px #fdeeee;">Tái khởi tạo</span>
<span class="t" style="left:36.14px;top:288px;font-size:16.25px;color:#6c4a70;letter-spacing:0.411px;-webkit-text-stroke:0.18px #6c4a70;">git@github.com:</span>
<span class="t" style="left:371.50px;top:288px;font-size:16.25px;color:#6c4a70;letter-spacing:1.020px;-webkit-text-stroke:0.18px #6c4a70;">git</span>
<span class="t" style="left:36.09px;top:331px;font-size:16.25px;color:#474d53;letter-spacing:0.043px;-webkit-text-stroke:0.42px #474d53;">SSH Key</span>
<span class="t" style="left:36.94px;top:371px;font-size:16.25px;color:#474d53;letter-spacing:0.507px;-webkit-text-stroke:0.42px #474d53;">Được fork từ</span>
<span class="t" style="left:924.46px;top:331px;font-size:16.25px;color:#474d53;letter-spacing:0.864px;-webkit-text-stroke:0.42px #474d53;">Depth</span>
<span class="t" style="left:924.46px;top:371px;font-size:16.25px;color:#474d53;letter-spacing:0.701px;-webkit-text-stroke:0.42px #474d53;">Nhà cung cấp</span>
<span class="t" style="left:1126.28px;top:331px;font-size:16.25px;color:#474d53;-webkit-text-stroke:0.18px #474d53;">0</span>
<span class="t" style="left:51.98px;top:444px;font-size:16.25px;color:#4c4c5a;letter-spacing:0.661px;-webkit-text-stroke:0.18px #4c4c5a;">Nhánh</span>
<span class="t" style="left:135.58px;top:444px;font-size:16.25px;color:#6c4a70;letter-spacing:0.357px;-webkit-text-stroke:0.18px #6c4a70;">Thông tin khác</span>
<span class="t" style="left:1664.08px;top:503px;font-size:16.25px;color:#4c4c4c;letter-spacing:0.547px;-webkit-text-stroke:0.18px #4c4c4c;">1-40 / 65</span>
<span class="t" style="left:42.36px;top:542px;font-size:16.25px;color:#42484e;letter-spacing:0.437px;-webkit-text-stroke:0.45px #42484e;">Tên</span>
<span class="t" style="left:933.28px;top:542px;font-size:16.25px;color:#42484e;letter-spacing:1.035px;-webkit-text-stroke:0.45px #42484e;">Mặc định</span>
<span class="t" style="left:1251.68px;top:542px;font-size:16.25px;color:#42484e;letter-spacing:0.669px;-webkit-text-stroke:0.45px #42484e;">Pull lần cuối</span>
<span class="t" style="left:1551.96px;top:542px;font-size:16.25px;color:#42484e;letter-spacing:0.467px;-webkit-text-stroke:0.45px #42484e;">Quét Tự động</span>
<span class="t" style="left:40.39px;top:580px;font-size:16.25px;color:#474d53;letter-spacing:0.582px;-webkit-text-stroke:0.18px #474d53;">10.0</span>
<span class="t" style="left:1110.77px;top:581px;font-size:15px;color:#f8e4f8;letter-spacing:-0.092px;-webkit-text-stroke:0.06px #f8e4f8;">Checkout</span>
<span class="t" style="left:40.39px;top:616px;font-size:16.25px;color:#474d53;letter-spacing:0.982px;-webkit-text-stroke:0.18px #474d53;">11.0</span>
<span class="t" style="left:1110.77px;top:617px;font-size:15px;color:#f8e4f8;letter-spacing:-0.092px;-webkit-text-stroke:0.06px #f8e4f8;">Checkout</span>
<span class="t" style="left:40.39px;top:652px;font-size:16.25px;color:#474d53;letter-spacing:0.582px;-webkit-text-stroke:0.18px #474d53;">12.0</span>
<span class="t" style="left:1110.77px;top:653px;font-size:15px;color:#f8e4f8;letter-spacing:-0.092px;-webkit-text-stroke:0.06px #f8e4f8;">Checkout</span>
<span class="t" style="left:40.39px;top:688px;font-size:16.25px;color:#474d53;letter-spacing:0.582px;-webkit-text-stroke:0.18px #474d53;">13.0</span>
<span class="t" style="left:1110.77px;top:689px;font-size:15px;color:#f8e4f8;letter-spacing:-0.092px;-webkit-text-stroke:0.06px #f8e4f8;">Checkout</span>
<span class="t" style="left:40.39px;top:725px;font-size:16.25px;color:#474d53;letter-spacing:0.582px;-webkit-text-stroke:0.18px #474d53;">14.0</span>
<span class="t" style="left:1110.77px;top:726px;font-size:15px;color:#f8e4f8;letter-spacing:-0.092px;-webkit-text-stroke:0.06px #f8e4f8;">Checkout</span>
<span class="t" style="left:40.39px;top:761px;font-size:16.25px;color:#474d53;letter-spacing:0.582px;-webkit-text-stroke:0.18px #474d53;">15.0</span>
<span class="t" style="left:1110.77px;top:762px;font-size:15px;color:#f8e4f8;letter-spacing:-0.092px;-webkit-text-stroke:0.06px #f8e4f8;">Checkout</span>
<span class="t" style="left:40.89px;top:797px;font-size:16.25px;color:#474d53;letter-spacing:0.624px;-webkit-text-stroke:0.18px #474d53;">7.0</span>
<span class="t" style="left:1110.77px;top:798px;font-size:15px;color:#f8e4f8;letter-spacing:-0.092px;-webkit-text-stroke:0.06px #f8e4f8;">Checkout</span>
<span class="t" style="left:40.95px;top:833px;font-size:16.25px;color:#474d53;letter-spacing:0.592px;-webkit-text-stroke:0.18px #474d53;">8.0</span>
<span class="t" style="left:1110.77px;top:834px;font-size:15px;color:#f8e4f8;letter-spacing:-0.092px;-webkit-text-stroke:0.06px #f8e4f8;">Checkout</span>
<span class="t" style="left:40.88px;top:869px;font-size:16.25px;color:#474d53;letter-spacing:0.627px;-webkit-text-stroke:0.18px #474d53;">9.0</span>
<span class="t" style="left:1110.77px;top:870px;font-size:15px;color:#f8e4f8;letter-spacing:-0.092px;-webkit-text-stroke:0.06px #f8e4f8;">Checkout</span>
<span class="t" style="left:1110.77px;top:906px;font-size:15px;color:#f8e4f8;letter-spacing:-0.092px;-webkit-text-stroke:0.06px #f8e4f8;">Checkout</span>
</div>
</body></html>
